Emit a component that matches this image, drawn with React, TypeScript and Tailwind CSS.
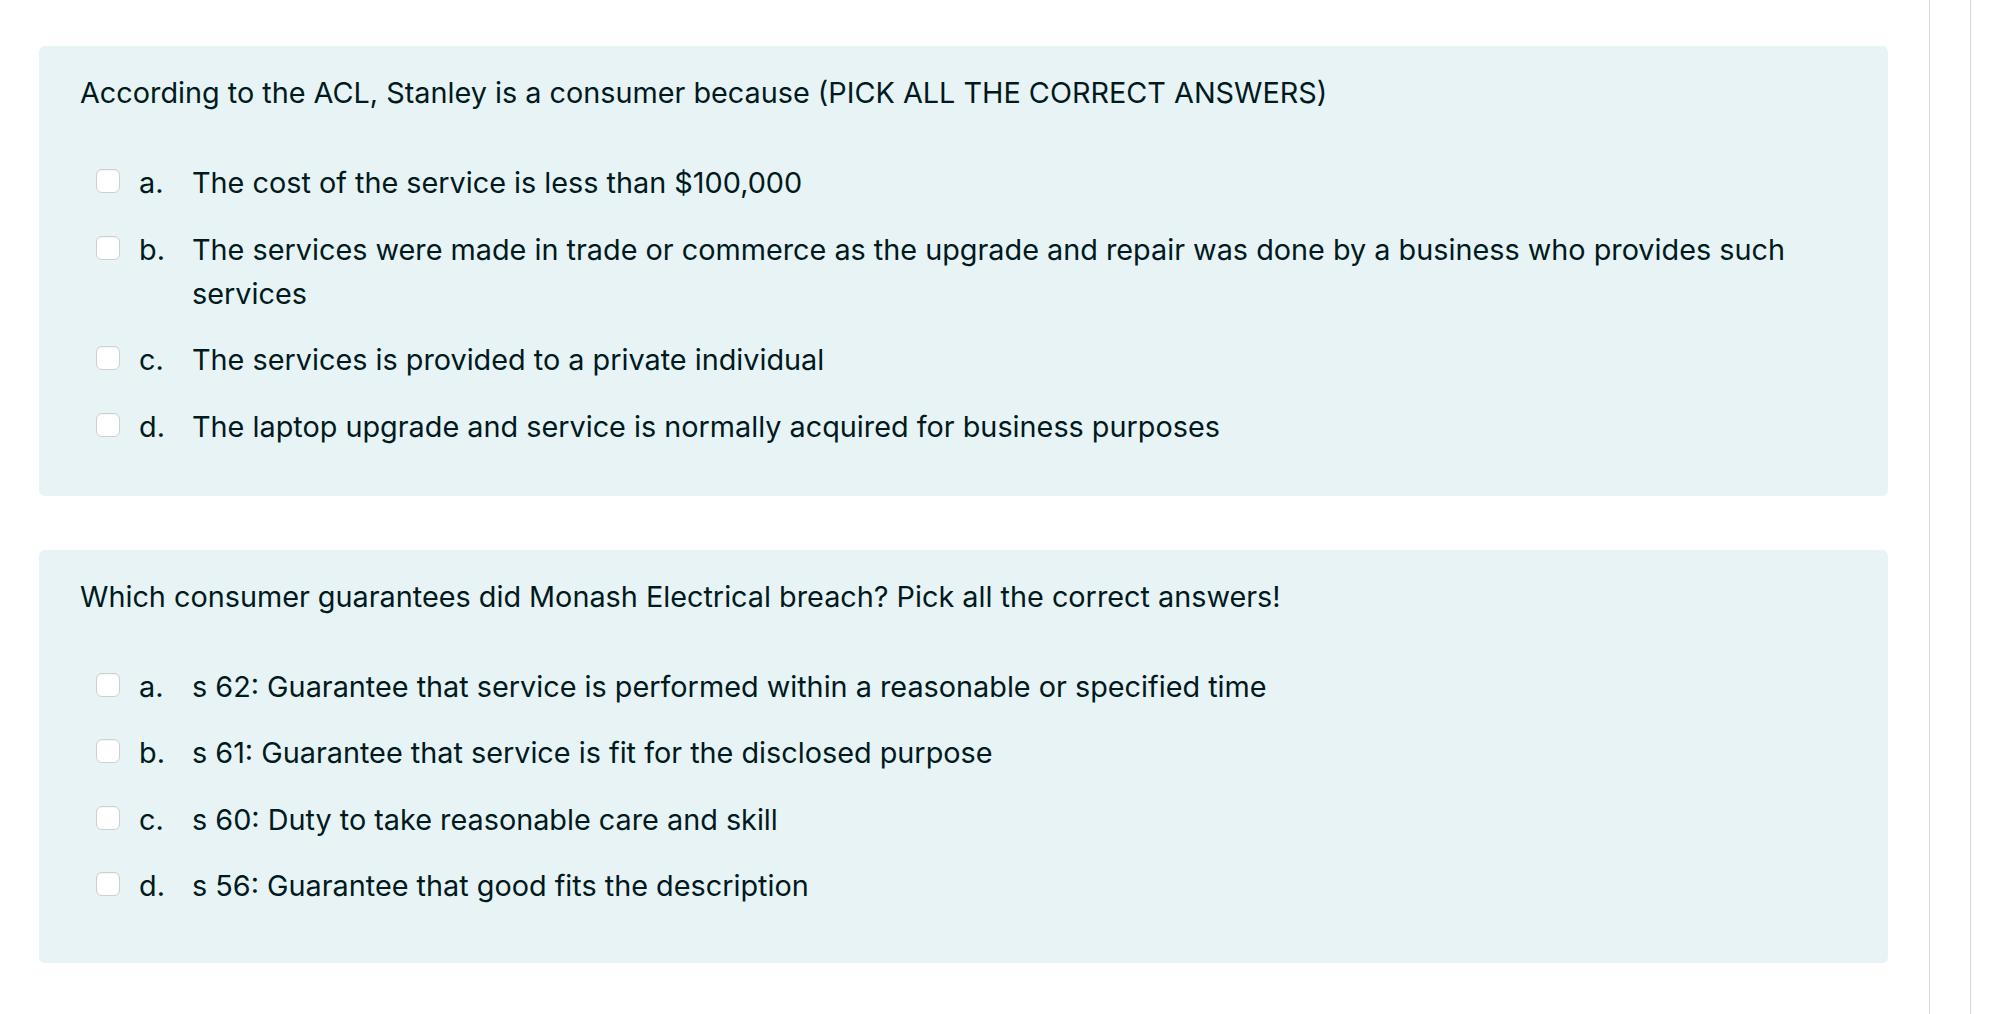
import { FC } from "react";

interface Question {
  text: string;
  options: { letter: string; label: string }[];
  bottomPad: string;
}

const questions: Question[] = [
  {
    text: "According to the ACL, Stanley is a consumer because (PICK ALL THE CORRECT ANSWERS)",
    options: [
      { letter: "a.", label: "The cost of the service is less than $100,000" },
      {
        letter: "b.",
        label:
          "The services were made in trade or commerce as the upgrade and repair was done by a business who provides such services",
      },
      { letter: "c.", label: "The services is provided to a private individual" },
      { letter: "d.", label: "The laptop upgrade and service is normally acquired for business purposes" },
    ],
    bottomPad: "pb-[47px]",
  },
  {
    text: "Which consumer guarantees did Monash Electrical breach? Pick all the correct answers!",
    options: [
      { letter: "a.", label: "s 62: Guarantee that service is performed within a reasonable or specified time" },
      { letter: "b.", label: "s 61: Guarantee that service is fit for the disclosed purpose" },
      { letter: "c.", label: "s 60: Duty to take reasonable care and skill" },
      { letter: "d.", label: "s 56: Guarantee that good fits the description" },
    ],
    bottomPad: "pb-[55px]",
  },
];

const QuestionCard: FC<{ q: Question }> = ({ q }) => (
  <div className={`rounded-[6px] bg-[#e7f3f5] pl-[41px] pr-[60px] pt-[25px] ${q.bottomPad}`}>
    <div className="leading-[44px]">{q.text}</div>
    <div className="mt-[46px] flex flex-col gap-[22.5px]">
      {q.options.map((o) => (
        <div key={o.letter} className="flex items-start">
          <span className="ml-[16px] mt-[8px] h-[24px] w-[24px] shrink-0 rounded-[6px] border border-[#cfcfcf] bg-white shadow-[inset_0_1px_1px_rgba(0,0,0,0.04)]" />
          <span className="ml-[19px] w-[53px] shrink-0 leading-[44px]">{o.letter}</span>
          <span className="leading-[44px]">{o.label}</span>
        </div>
      ))}
    </div>
  </div>
);

export default function App() {
  return (
    <div
      className="flex h-[1014px] w-full bg-white text-[28.8px] text-[#001a1e]"
      style={{ fontFamily: "Inter, 'Noto Sans', sans-serif" }}
    >
      <div className="w-[1929px] shrink-0 pl-[39px] pr-[41px] pt-[46px]">
        <div className="flex flex-col gap-[54px]">
          {questions.map((q, i) => (
            <QuestionCard key={i} q={q} />
          ))}
        </div>
      </div>
      <div className="w-[42px] shrink-0 border-l border-r border-[#d9d9d9]" />
      <div className="flex-1" />
    </div>
  );
}
